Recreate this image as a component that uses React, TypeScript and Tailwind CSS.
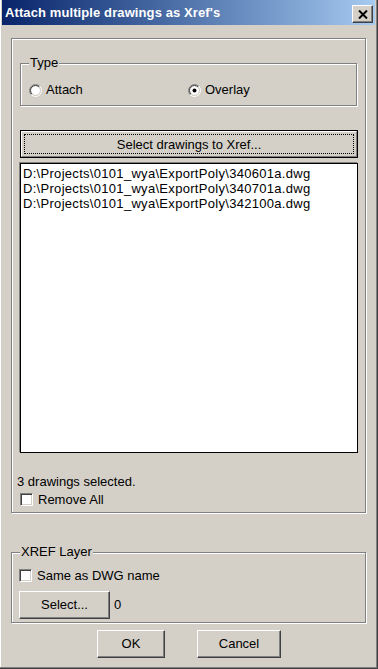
import React from 'react';

const FACE = 'bg-[#d4d0c8]';

const files = [
  'D:\\Projects\\0101_wya\\ExportPoly\\340601a.dwg',
  'D:\\Projects\\0101_wya\\ExportPoly\\340701a.dwg',
  'D:\\Projects\\0101_wya\\ExportPoly\\342100a.dwg',
];

const Radio: React.FC<{ checked?: boolean }> = ({ checked }) => {
  const c = 6.5;
  const arc = (r: number) => {
    const d = r * 0.7071;
    return {
      tl: `M ${c - d} ${c + d} A ${r} ${r} 0 0 1 ${c + d} ${c - d}`,
      br: `M ${c + d} ${c - d} A ${r} ${r} 0 0 1 ${c - d} ${c + d}`,
    };
  };
  const o = arc(6);
  const i = arc(5);
  return (
    <svg width="13" height="13" viewBox="0 0 13 13" className="shrink-0">
      <circle cx={c} cy={c} r="4.6" fill="#fff" />
      <path d={o.tl} stroke="#808080" strokeWidth="1" fill="none" />
      <path d={o.br} stroke="#ffffff" strokeWidth="1" fill="none" />
      <path d={i.tl} stroke="#404040" strokeWidth="1" fill="none" />
      <path d={i.br} stroke="#d4d0c8" strokeWidth="1" fill="none" />
      {checked && <circle cx={c} cy={c} r="2" fill="#000" />}
    </svg>
  );
};

const Checkbox: React.FC = () => (
  <div className="w-[13px] h-[13px] shrink-0 bg-white border-t border-l border-[#808080] border-b border-r border-b-white border-r-white shadow-[inset_1px_1px_0_#404040,inset_-1px_-1px_0_#d4d0c8]" />
);

const Button: React.FC<{ className?: string; children: React.ReactNode }> = ({ className = '', children }) => (
  <div
    className={`${className} flex items-center justify-center border-t border-l border-white border-b border-r border-b-[#404040] border-r-[#404040] shadow-[inset_-1px_-1px_0_#808080] ${FACE} text-black`}
  >
    {children}
  </div>
);

const Group: React.FC<{ className?: string; children: React.ReactNode }> = ({ className = '', children }) => (
  <div
    className={`${className} border border-[#808080] shadow-[inset_1px_1px_0_#ffffff,1px_1px_0_#ffffff] flex flex-col`}
  >
    {children}
  </div>
);

export default function App() {
  return (
    <div
      className={`w-[378px] h-[669px] ${FACE} flex flex-col border-r border-b border-[#404040] shadow-[inset_-1px_-1px_0_#808080,inset_1px_0_0_#ffffff] text-[13px] text-black overflow-hidden`}
      style={{ fontFamily: '"Liberation Sans", Arial, sans-serif' }}
    >
      {/* title bar */}
      <div className="ml-[2px] w-[373px] h-[25px] shrink-0 flex items-start justify-between bg-gradient-to-r from-[#0a246a] to-[#a6caf0]">
        <span className="ml-[3px] mt-[4px] text-white font-bold text-[13px] leading-[17px] tracking-[0.1px]">
          Attach multiple drawings as Xref's
        </span>
        <div className="mt-[5px] mr-[2px] w-[21px] h-[18px] flex items-center justify-center border-t border-l border-white border-b border-r border-b-[#404040] border-r-[#404040] shadow-[inset_-1px_-1px_0_#808080] bg-[#d4d0c8]">
          <svg width="10" height="9" viewBox="0 0 10 9">
            <path d="M1 0.5 L9 8.5 M9 0.5 L1 8.5" stroke="#000" strokeWidth="2" fill="none" />
          </svg>
        </div>
      </div>

      {/* main group */}
      <Group className="mt-[13px] ml-[11px] w-[355px] h-[475px] shrink-0">
        <Group className="mt-[24px] ml-[8px] w-[337px] h-[43px] shrink-0">
          <span className={`-mt-[8px] ml-[8px] px-[1px] h-[14px] leading-[14px] w-fit ${FACE}`}>Type</span>
          <div className="mt-[12px] pl-[8px] h-[16px] flex items-center">
            <div className="w-[159px] flex items-center gap-[4px]">
              <Radio />
              <span>Attach</span>
            </div>
            <div className="flex items-center gap-[4px]">
              <Radio checked />
              <span>Overlay</span>
            </div>
          </div>
        </Group>

        <div className={`mt-[24px] ml-[8px] w-[338px] h-[28px] shrink-0 border border-black p-0 ${FACE}`}>
          <div className="w-full h-full border-t border-l border-white border-b border-r border-b-[#808080] border-r-[#808080] p-[2px]">
            <div className="w-full h-full border border-dotted border-black flex items-center justify-center leading-[15px]">
              Select drawings to Xref...
            </div>
          </div>
        </div>

        <div className="mt-[5px] ml-[8px] w-[338px] h-[290px] shrink-0 bg-white border border-black shadow-[-1px_-1px_0_#808080] pt-[2px] pl-[2px] tracking-[0.3px]">
          {files.map((f) => (
            <div key={f} className="leading-[15px] whitespace-nowrap">
              {f}
            </div>
          ))}
        </div>

        <div className="mt-[21px] ml-[5px] leading-[15px]">3 drawings selected.</div>
        <div className="mt-[4px] ml-[8px] h-[13px] flex items-center gap-[5px]">
          <Checkbox />
          <span className="leading-[15px]">Remove All</span>
        </div>
      </Group>

      {/* xref layer group */}
      <Group className="mt-[39px] ml-[11px] w-[355px] h-[71px] shrink-0">
        <span className={`-mt-[8px] ml-[8px] px-[1px] h-[14px] leading-[14px] w-fit ${FACE}`}>XREF Layer</span>
        <div className="mt-[10px] ml-[7px] h-[13px] flex items-center gap-[5px]">
          <Checkbox />
          <span className="leading-[15px]">Same as DWG name</span>
        </div>
        <div className="mt-[9px] ml-[7px] flex items-center">
          <Button className="w-[91px] h-[28px]">Select...</Button>
          <span className="ml-[4px]">0</span>
        </div>
      </Group>

      <div className="mt-[7px] flex">
        <Button className="ml-[97px] w-[68px] h-[28px]">OK</Button>
        <Button className="ml-[32px] w-[84px] h-[28px]">Cancel</Button>
      </div>
    </div>
  );
}
